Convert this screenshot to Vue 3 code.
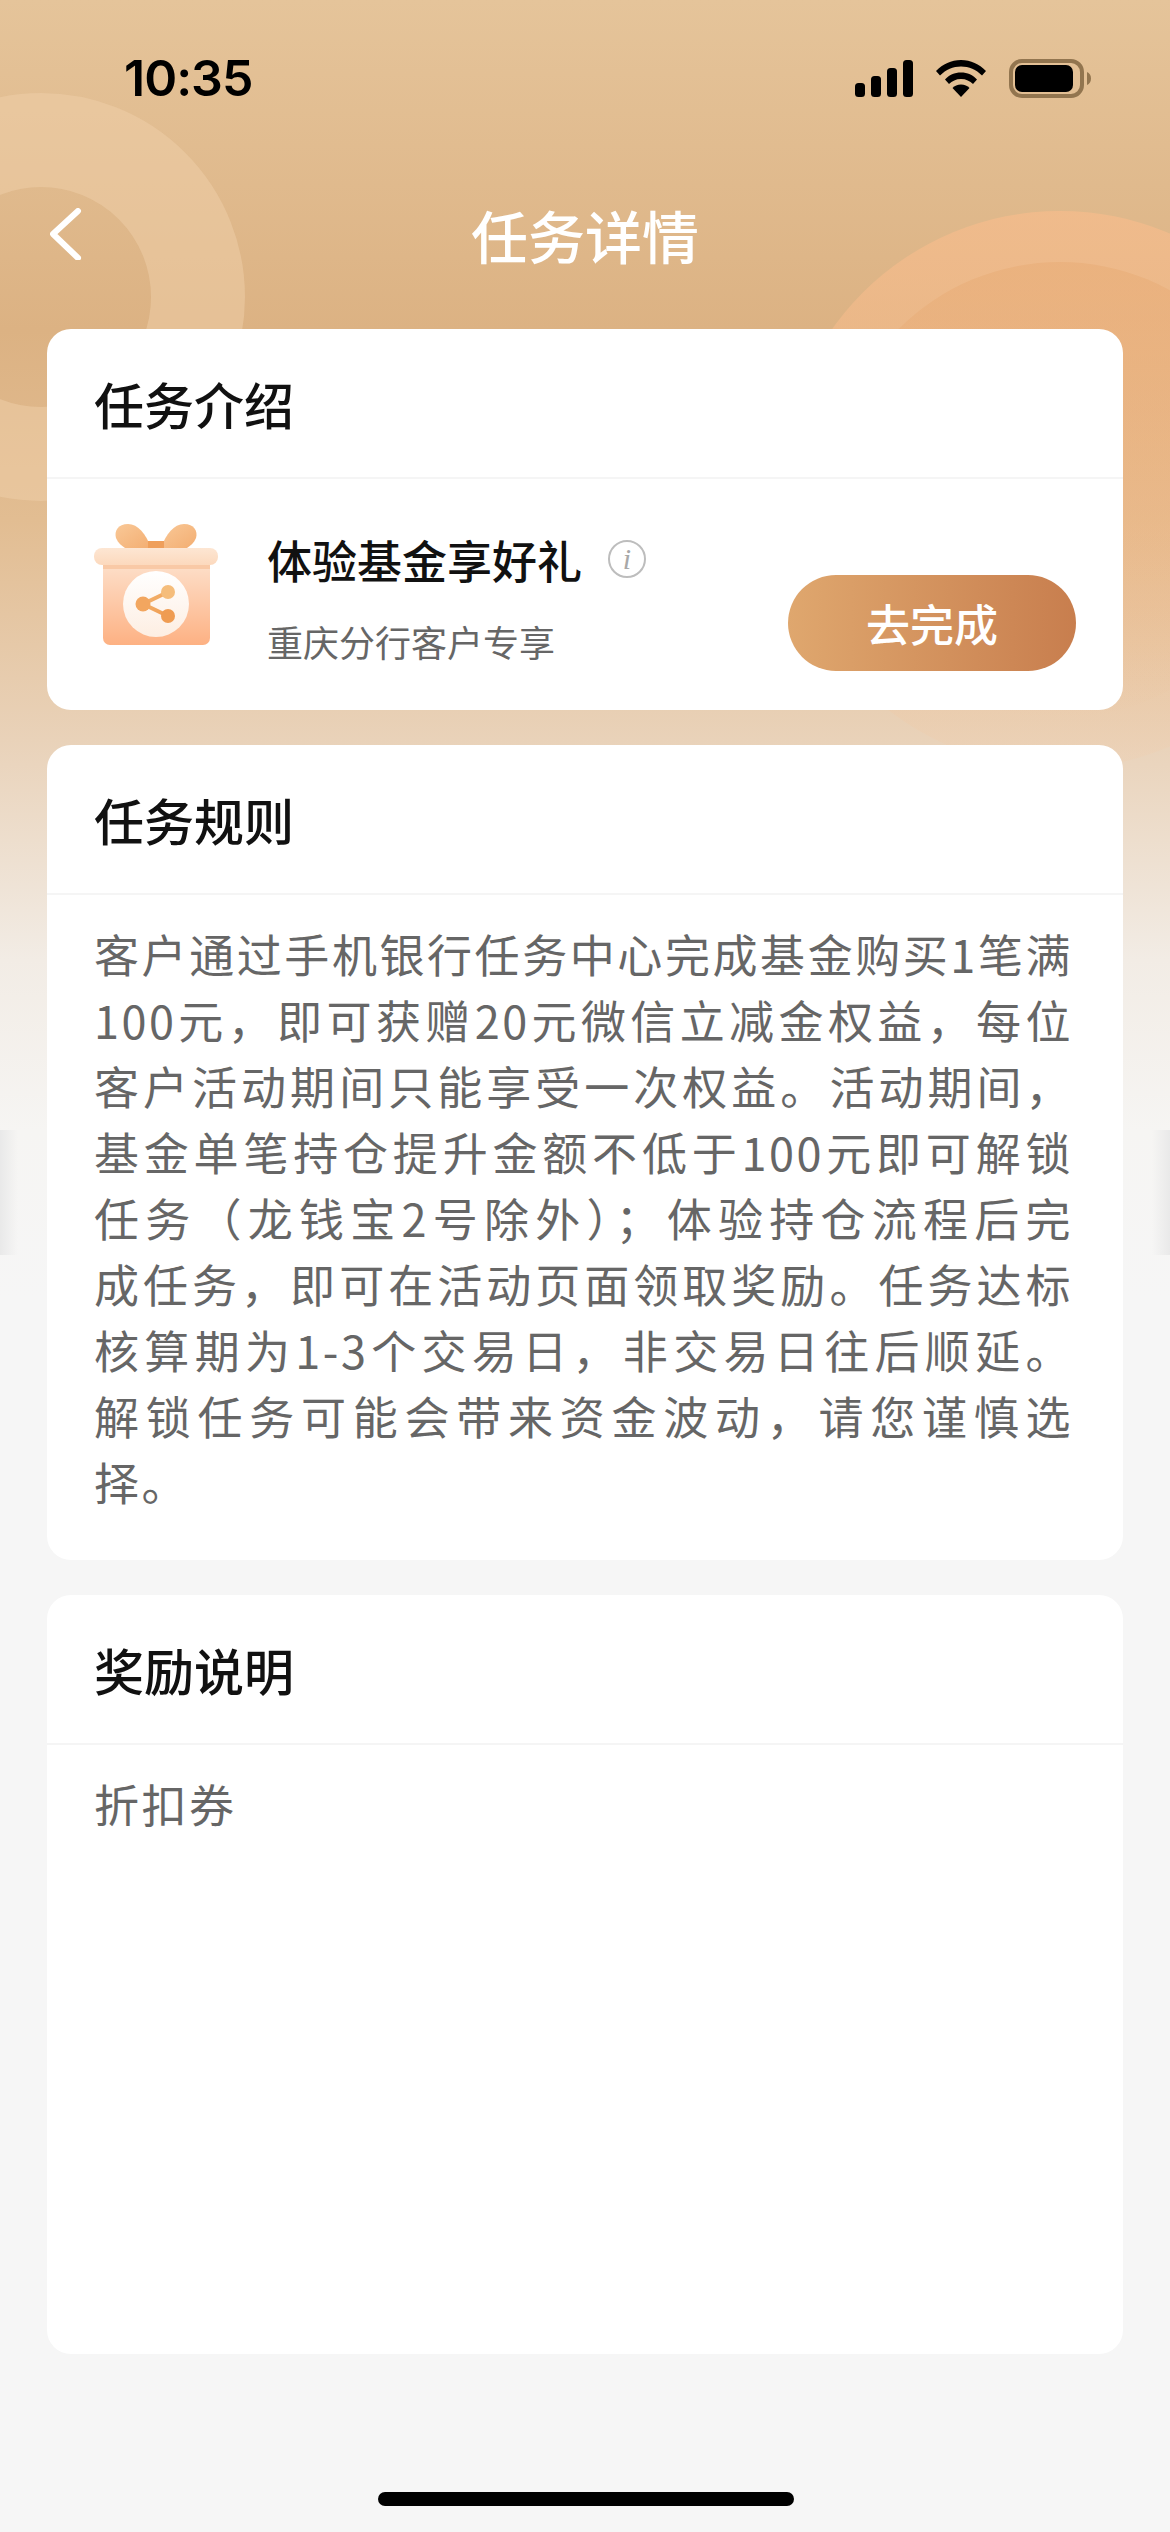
<script setup>
const ruleLines = [
  '客户通过手机银行任务中心完成基金购买1笔满',
  '100元，即可获赠20元微信立减金权益，每位',
  '客户活动期间只能享受一次权益。活动期间，',
  '基金单笔持仓提升金额不低于100元即可解锁',
  '任务（龙钱宝2号除外）；体验持仓流程后完',
  '成任务，即可在活动页面领取奖励。任务达标',
  '核算期为1-3个交易日，非交易日往后顺延。',
  '解锁任务可能会带来资金波动，请您谨慎选',
]
</script>

<template>
  <div class="page">
    <div class="ring-left"></div>
    <div class="ring-right"><div class="ring-right-inner"></div></div>
    <div class="edge edge-l"></div>
    <div class="edge edge-r"></div>

    <div class="status">
      <span class="time">10:35</span>
      <div class="status-icons">
        <svg width="58" height="37" viewBox="0 0 58 37">
          <rect x="0" y="23" width="10" height="14" rx="3.5" fill="#000" />
          <rect x="16" y="16" width="10" height="21" rx="3.5" fill="#000" />
          <rect x="32" y="8" width="10" height="29" rx="3.5" fill="#000" />
          <rect x="48" y="0" width="10" height="37" rx="3.5" fill="#000" />
        </svg>
        <svg width="50" height="37" viewBox="0 0 50 37">
          <path d="M25 0C15 0 7 4 0 11l4 4.500C10 9.500 17 6.500 25 6.500S40 9.500 46 15.500L50 11C43 4 35 0 25 0Z" fill="#000" />
          <path d="M25 12.500C18.500 12.500 13 15 9 19.500l4 4.500C16 21 20 19 25 19s9 2 12 5l4-4.500C37 15 31.500 12.500 25 12.500Z" fill="#000" />
          <path d="M25 24.500c-3.500 0-6.500 1.200-8.500 3.500L25 37l8.500-9c-2-2.300-5-3.500-8.500-3.500Z" fill="#000" />
        </svg>
        <svg width="82" height="39" viewBox="0 0 82 39">
          <rect x="2" y="2" width="71" height="35" rx="11" fill="none" stroke="#92754f" stroke-width="4" />
          <rect x="6" y="6" width="58" height="27" rx="7" fill="#000" />
          <path d="M78 13c2.500 1 4 3.500 4 6.500s-1.500 5.500-4 6.500Z" fill="#92754f" />
        </svg>
      </div>
    </div>

    <div class="nav">
      <svg class="back" width="32" height="52" viewBox="0 0 32 52">
        <path d="M28 3 3 26l25 24" fill="none" stroke="#fff" stroke-width="6" stroke-linecap="round" stroke-linejoin="round" />
      </svg>
      <div class="nav-title">任务详情</div>
    </div>

    <div class="cards">
      <section class="card">
        <div class="card-head">任务介绍</div>
        <div class="intro">
          <svg class="gift" width="124" height="122" viewBox="0 0 124 122">
            <defs>
              <linearGradient id="box" x1="0" y1="0" x2="0" y2="1">
                <stop offset="0" stop-color="#fde0cb" />
                <stop offset="1" stop-color="#fdb183" />
              </linearGradient>
              <linearGradient id="lid" x1="0" y1="0" x2="0" y2="1">
                <stop offset="0" stop-color="#fde6d3" />
                <stop offset="1" stop-color="#fcd9bd" />
              </linearGradient>
              <linearGradient id="bow" x1="0" y1="0" x2="1" y2="1">
                <stop offset="0" stop-color="#f9c897" />
                <stop offset="1" stop-color="#f3ae72" />
              </linearGradient>
              <linearGradient id="disc" x1="0" y1="0" x2="0" y2="1">
                <stop offset="0" stop-color="#fff" />
                <stop offset="1" stop-color="#fdeee2" />
              </linearGradient>
              <linearGradient id="nodes" x1="0" y1="0" x2="1" y2="1">
                <stop offset="0" stop-color="#f4b570" />
                <stop offset="1" stop-color="#ef9c52" />
              </linearGradient>
            </defs>
            <path d="M57 24C52 10 44 0 34 0 24 0 20 7 22 14c2 5 6 8 9 10Z" fill="url(#bow)" />
            <path d="M67 24C72 10 80 0 90 0c10 0 14 7 12 14-2 5-6 8-9 10Z" fill="url(#bow)" />
            <rect x="54" y="17" width="16" height="8" fill="#ef9f5b" />
            <rect x="9" y="38" width="107" height="83" rx="7" fill="url(#box)" />
            <rect x="9" y="41" width="107" height="4" fill="#f9c9a6" />
            <rect x="0" y="24" width="124" height="17" rx="8" fill="url(#lid)" />
            <circle cx="62" cy="80" r="33" fill="url(#disc)" />
            <path d="M74 68 49 80l25 12" fill="none" stroke="url(#nodes)" stroke-width="4" />
            <circle cx="74" cy="68" r="7" fill="#f5bd7b" />
            <circle cx="49" cy="80" r="7.500" fill="#f2a65f" />
            <circle cx="74" cy="92" r="7" fill="#ef9c52" />
          </svg>
          <div class="intro-text">
            <div class="intro-name">
              <span>体验基金享好礼</span>
              <span class="info-icon">i</span>
            </div>
            <div class="intro-sub">重庆分行客户专享</div>
          </div>
          <button class="go-btn">去完成</button>
        </div>
      </section>

      <section class="card">
        <div class="card-head">任务规则</div>
        <div class="rules">
          <div v-for="line in ruleLines" :key="line" class="rule-line">{{ line }}</div>
          <div class="rule-last">择。</div>
        </div>
      </section>

      <section class="card card-reward">
        <div class="card-head">奖励说明</div>
        <div class="rules">
          <div class="rule-last">折扣券</div>
        </div>
      </section>
    </div>

    <div class="home-bar"></div>
  </div>
</template>

<style scoped>
.page {
  position: relative;
  width: 1170px;
  height: 2532px;
  overflow: hidden;
  font-family: "Noto Sans CJK SC", "Noto Sans", sans-serif;
  background: linear-gradient(180deg, #e5c49a 0, #dcb283 330px, #e2bd92 520px, #e9d2b9 740px, #f2ece5 960px, #f6f5f3 1130px, #f6f6f6 1300px);
}

.ring-left {
  position: absolute;
  left: -163px;
  top: 93px;
  width: 408px;
  height: 408px;
  box-sizing: border-box;
  border: 94px solid rgba(240, 208, 170, 0.5);
  border-radius: 50%;
}

.ring-right {
  position: absolute;
  left: 781px;
  top: 211px;
  width: 558px;
  height: 558px;
  border-radius: 50%;
  background: linear-gradient(180deg, rgba(246, 188, 140, 0.72) 0, rgba(246, 188, 140, 0.4) 45%, rgba(246, 200, 160, 0.12) 100%);
}

.ring-right-inner {
  position: absolute;
  left: 51px;
  top: 51px;
  width: 456px;
  height: 456px;
  border-radius: 50%;
  background: linear-gradient(180deg, rgba(232, 172, 118, 0.55) 0, rgba(232, 172, 118, 0.25) 50%, rgba(232, 172, 118, 0) 100%);
}

.edge {
  position: absolute;
  top: 1130px;
  width: 18px;
  height: 125px;
}

.edge-l {
  left: 0;
  background: linear-gradient(90deg, #e9e9e9, rgba(240, 240, 240, 0));
}

.edge-r {
  right: 0;
  background: linear-gradient(270deg, #e9e9e9, rgba(240, 240, 240, 0));
}

.status {
  position: relative;
  height: 156px;
  display: flex;
  align-items: center;
  justify-content: space-between;
  padding: 0 79px 0 124px;
}

.time {
  font-family: Inter, Roboto, sans-serif;
  font-size: 50px;
  font-weight: 600;
  letter-spacing: -1px;
  color: #000;
}

.status-icons {
  display: flex;
  align-items: center;
  gap: 23px;
}

.nav {
  position: relative;
  height: 173px;
  box-sizing: border-box;
  padding-bottom: 17px;
  display: flex;
  align-items: center;
  justify-content: center;
}

.back {
  position: absolute;
  left: 50px;
  top: 52px;
}

.nav-title {
  font-size: 57px;
  font-weight: 500;
  color: #fff;
  line-height: 1;
}

.cards {
  position: relative;
  display: flex;
  flex-direction: column;
  gap: 35px;
  padding: 0 47px;
}

.card {
  background: #fff;
  border-radius: 24px;
}

.card-reward {
  height: 759px;
}

.card-head {
  height: 150px;
  box-sizing: border-box;
  border-bottom: 2px solid #f5f5f5;
  padding-left: 47px;
  display: flex;
  align-items: center;
  font-size: 50px;
  font-weight: 500;
  color: #111;
}

.intro {
  height: 231px;
  box-sizing: border-box;
  display: flex;
  padding: 45px 47px 0;
}

.gift {
  flex: none;
}

.intro-text {
  margin-left: 49px;
  display: flex;
  flex-direction: column;
}

.intro-name {
  display: flex;
  align-items: center;
  height: 70px;
  font-size: 45px;
  font-weight: 500;
  color: #111;
}

.info-icon {
  width: 34px;
  height: 34px;
  margin-left: 26px;
  border: 2px solid #bdbdbd;
  border-radius: 50%;
  display: flex;
  align-items: center;
  justify-content: center;
  font-family: "Liberation Serif", serif;
  font-style: italic;
  font-size: 30px;
  font-weight: 400;
  color: #a8a8a8;
  line-height: 1;
}

.intro-sub {
  margin-top: 22px;
  font-size: 36px;
  line-height: 50px;
  color: #666;
}

.go-btn {
  margin-left: auto;
  margin-top: 51px;
  width: 288px;
  height: 96px;
  border: none;
  border-radius: 48px;
  padding: 0;
  background: linear-gradient(90deg, #dfa76e, #c87e4e);
  color: #fff;
  font-family: inherit;
  font-size: 44px;
  font-weight: 500;
}

.rules {
  padding: 26px 50px 45px 47px;
  font-size: 45px;
  line-height: 66px;
  color: #666;
  letter-spacing: 2.5px;
}

.rule-line {
  white-space: nowrap;
  text-align: justify;
  text-align-last: justify;
}

.home-bar {
  position: absolute;
  left: 378px;
  top: 2492px;
  width: 416px;
  height: 14px;
  border-radius: 7px;
  background: #000;
}
</style>

<style>
html, body {
  margin: 0;
  padding: 0;
}
</style>
